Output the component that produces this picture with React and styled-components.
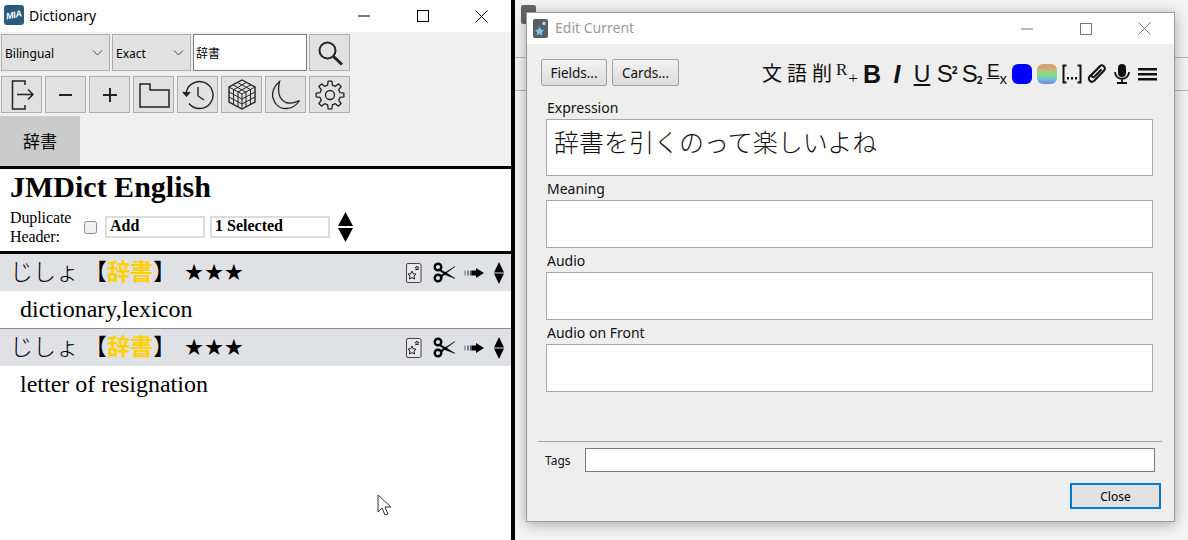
import React from "react";
import styled, { createGlobalStyle } from "styled-components";

const Global = createGlobalStyle`
  html, body { margin: 0; padding: 0; background: #fff; }
  body { width: 1188px; height: 540px; overflow: hidden; font-family: "Open Sans", "Noto Sans CJK JP", sans-serif; }
  * { box-sizing: border-box; }
`;
const ui = `"Noto Sans", "Noto Sans CJK JP", sans-serif`;
const serif = `"Liberation Serif", "Noto Sans CJK JP", serif`;
const sans = `"Liberation Sans", sans-serif`;

const Page = styled.div`display: flex; width: 1188px; height: 540px; position: relative;`;
const LeftPane = styled.div`width: 511px; height: 540px; flex: none; background: #fff; display: flex; flex-direction: column;`;
const Divider = styled.div`width: 4px; flex: none; background: #000;`;
const Desktop = styled.div`
  flex: 1; position: relative; background: #f3f3f3; padding: 12px 13px 18px 11px; display: flex;
`;

const TitleBar = styled.div`height: 32px; flex: none; display: flex; align-items: center; padding-left: 4px; background: #fff;`;
const TitleText = styled.span`font: 14px ${ui}; color: #000; margin-left: 5px; flex: 1; padding-bottom: 2px;`;
const WinButtons = styled.div`display: flex; height: 100%; width: 177px;`;
const WinBtn = styled.div`width: 59px; display: flex; align-items: center; justify-content: center;`;

const Tools = styled.div`background: #f0f0f0; height: 134px; flex: none; display: flex; flex-direction: column; padding: 2px 0 0 1px;`;
const Row = styled.div`display: flex; height: 37px; gap: ${p => p.$gap ?? 4}px; margin-bottom: ${p => p.$mb ?? 0}px;`;
const Select = styled.div`
  width: ${p => p.$w}px; height: 37px; background: #e1e1e1; border: 1px solid #adadad; margin-right: 2px;
  display: flex; align-items: center; justify-content: space-between; padding: 1px 6px 0 3px; font: 12px ${ui}; color: #000;
`;
const SearchInput = styled.div`
  width: 114px; height: 37px; background: #fff; border: 1px solid #7a7a7a; margin-right: 2px;
  display: flex; align-items: center; padding-left: 2px; font: 12px ${ui}; color: #000;
`;
const IconBtn = styled.div`
  width: 41px; height: 37px; background: #e1e1e1; border: 1px solid #adadad; display: flex; align-items: center; justify-content: center;
`;
const Tab = styled.div`
  width: 80px; height: 50px; margin-left: -1px; padding-bottom: 2px; background: #cbcbcb; display: flex; align-items: center; justify-content: center; font: 17px ${ui}; color: #000;
`;
const HeavyRule = styled.div`height: 3px; flex: none; background: #000;`;

const DictHead = styled.div`height: 82px; flex: none; padding: 0 0 0 10px; font-family: ${serif};`;
const DictTitle = styled.div`font-size: 30px; font-weight: 700; line-height: 35px; color: #000;`;
const HeaderControls = styled.div`display: flex; align-items: center; margin-top: 4px;`;
const DupLabel = styled.div`font-size: 16px; line-height: 19px; width: 74px; color: #000; letter-spacing: -0.1px;`;
const Check = styled.div`width: 13px; height: 13px; background: #f0f0f0; border: 1px solid #8f8f8f; border-radius: 2.5px; margin-right: 8px;`;
const BoldBox = styled.div`
  width: ${p => p.$w}px; height: 22px; border: 2px solid #dcdcdc; margin-right: 5px; padding-left: ${p => p.$pl}px;
  font-size: 16px; font-weight: 700; line-height: 16px; color: #000;
`;
const Arrows = styled.div`display: flex; margin-left: 3px;`;

const EntryHead = styled.div`
  height: ${p => p.$h}px; flex: none; background: #e0e1e5; display: flex; align-items: center; padding: 0 7px 0 10px; font-family: ${serif};
`;
const Reading = styled.span`font: 300 23px "Noto Sans CJK JP", sans-serif; color: #000; line-height: 1; flex: none; padding-bottom: 4px;`;
const Term = styled.span`color: #ffd000; font-weight: 700;`;
const Stars = styled.span`font: 22.5px "DejaVu Sans", sans-serif; color: #000; margin-left: 8px; letter-spacing: -0.3px; flex: 1; padding-bottom: 2px;`;
const EntryIcons = styled.div`display: flex; align-items: center;`;
const IconGap = styled.span`width: ${p => p.$w}px; flex: none;`;
const Definition = styled.div`
  height: ${p => p.$h}px; flex: none; padding-left: 20px; font: 24px/37px ${serif}; color: #000;
  border-bottom: ${p => (p.$rule ? "1px solid #8a8a8a" : "none")};
`;

const GhostWindow = styled.div`position: absolute; left: 0; top: 0; right: 0; height: 120px;`;
const GhostIcon = styled.div`position: absolute; left: 6px; top: 5px; width: 15px; height: 19px; background: #62686c; border-radius: 2px;`;
const GhostLine = styled.div`position: absolute; left: 0; right: 0; top: ${p => p.$t}px; height: 1px; background: #b4b4b4;`;
const GhostCtl = styled.div`position: absolute; left: ${p => p.$l}px; top: 9px; opacity: .6;`;

const EditWindow = styled.div`
  flex: 1; position: relative; background: #eeeeee; border: 1px solid #9b9b9b; box-shadow: 0 2px 12px rgba(0,0,0,.32);
  display: flex; flex-direction: column;
`;
const EditTitle = styled.div`height: 31px; flex: none; background: #fff; display: flex; align-items: center; padding-left: 6px;`;
const EditTitleText = styled.span`font: 14px ${ui}; color: #9a9a9a; margin-left: 7px; flex: 1; padding-bottom: 2px;`;
const EditBody = styled.div`flex: 1; display: flex; flex-direction: column; padding: 15px 12px 0 12px;`;
const TopBar = styled.div`display: flex; align-items: flex-start; height: 27px; padding-left: 2px;`;
const PushBtn = styled.div`
  width: ${p => p.$w}px; height: 27px; margin-right: 5px; border: 1px solid #a0a0a0; border-radius: 2px;
  background: linear-gradient(#f2f2f2, #dcdcdc); display: flex; align-items: center; justify-content: center; font: 13.5px ${ui}; color: #111;
`;
const FormatBar = styled.div`display: grid; grid-template-columns: repeat(16, 25px); margin-left: auto; padding-top: 5px; height: 25px;`;
const FormatItem = styled.div`
  width: 20px; height: 20px; display: flex; align-items: center; justify-content: center; color: #111; line-height: 1; position: relative;
  font-family: ${p => p.$font || ui}; font-size: ${p => p.$size || 20}px; font-weight: ${p => p.$weight || 400}; font-style: ${p => p.$italic ? "italic" : "normal"};
`;
const Swatch = styled.div`width: 20px; height: 20px; border-radius: 6px; background: ${p => p.$bg};`;
const Sup = styled.span`font-size: 10px; font-weight: 700; align-self: flex-start; margin-top: 1px;`;
const Sub = styled.span`font-size: 10px; font-weight: 700; align-self: flex-end; margin-bottom: -1px;`;
const FieldLabel = styled.div`font: 14px/18px ${ui}; color: #111; padding-left: 8px; margin-top: ${p => p.$mt ?? 4}px; height: 18px;`;
const Field = styled.div`
  margin-left: 7px; width: 607px; height: ${p => p.$h}px; background: #fff; border: 1px solid #a8a8a8; margin-top: 2px;
  font: 300 25px "Noto Sans CJK JP", sans-serif; color: #111; padding: 3px 0 0 7px; line-height: 36px;
`;
const Separator = styled.div`height: 1px; background: #a0a0a0; margin-top: 49px; margin-left: -1px;`;
const TagsRow = styled.div`display: flex; align-items: center; margin-top: 6px; height: 24px;`;
const TagsLabel = styled.span`font: 12px ${ui}; color: #111; width: 46px; padding-left: 6px;`;
const TagsInput = styled.div`width: 570px; height: 24px; background: #fff; border: 1px solid #7a7a7a;`;
const FootRow = styled.div`display: flex; justify-content: flex-end; margin-top: 11px; padding-right: 1px;`;
const CloseBtn = styled.div`
  width: 91px; height: 26px; background: #e1e1e1; border: 2px solid #0078d7; display: flex; align-items: center; justify-content: center; font: 12px ${ui}; color: #000;
`;
const Cursor = styled.svg`position: absolute; left: 377px; top: 494px;`;
const LogoBox = styled.div`
  width: 20px; height: 20px; margin-bottom: 2px; border-radius: 3px; background: #2b5b7c; display: flex; align-items: center; justify-content: center; overflow: hidden;
`;
const LogoText = styled.span`font: italic 700 9px ${sans}; color: #fff; transform: rotate(-12deg); letter-spacing: -0.3px;`;

const RPlus = styled.span`font: 17px/16px ${serif}; position: absolute; left: -1px; top: -2px;`;
const RPlusMark = styled.span`font: 300 17px/12px ${ui}; position: absolute; right: -1px; bottom: 0;`;
const Under = styled.span`text-decoration: underline; text-decoration-thickness: 1.5px; text-underline-offset: 2px;`;
const SmallS = styled.span`font: 24px ${sans}; letter-spacing: -1px;`;
const ExE = styled.span`font: 19px ${sans}; text-decoration: underline; position: relative; top: -3px;`;
const ExX = styled.span`font: 15px ${sans}; position: relative; top: 4px;`;

const Stroke = ({ w = 28, h = 28, sw = 1.5, children }) => (
  <svg width={w} height={h} viewBox={`0 0 ${w} ${h}`} fill="none" stroke="#222" strokeWidth={sw}>{children}</svg>
);
const Chevron = () => (
  <svg width="11" height="6" viewBox="0 0 11 6" fill="none" stroke="#444" strokeWidth="1"><path d="M1 .5l4.5 4.5L10 .5" /></svg>
);
const Search = () => (
  <Stroke w={28} h={28} sw={2}><circle cx="11.500" cy="11.500" r="8" /><path d="M17.500 17.500L26 25.500" strokeWidth="3" /></Stroke>
);
const Exit = () => (
  <Stroke w={24} h={32}><path d="M15 6V2H2.500v28H15v-4" /><path d="M7 15.500h16M18 10.500l5 5-5 5" /></Stroke>
);
const Minus = () => <Stroke w={14} h={4} sw={2}><path d="M0 2h13" /></Stroke>;
const Plus = () => <Stroke w={14} h={14} sw={2}><path d="M0 7h14M7 0v14" /></Stroke>;
const Folder = () => <Stroke w={32} h={26}><path d="M2 2h10v6h19v17H2z" /></Stroke>;
const History = () => (
  <Stroke w={32} h={30} sw={1.4}><path d="M4 15a13.500 13.500 0 1 1 3 8.500" /><path d="M1 12l3.500 4 3.500-4" fill="#222" /><path d="M16 7v9l6 4" /></Stroke>
);
const Cube = () => (
  <Stroke w={30} h={31} sw={1}>
    <path d="M15 1l13 7v15l-13 7-13-7V8z" strokeWidth="1.400" />
    <path d="M15 15L2 8M15 15l13-7M15 15v15M6 5.800l13 7.400M10.500 3.400l13 7.200M24 5.800l-13 7.200M19.500 3.400l-13 7.400M2 13l13 7 13-7M2 18l13 7 13-7M6.500 10.500v15.200M11 13v15M19 13v15M23.500 10.500v15.200" />
  </Stroke>
);
const Moon = () => (
  <Stroke w={30} h={30} sw={1.3}>
    <path d="M8.500 1.500C3 6 .5 13 2 18c2 7 7 11 13 10.500 5 0 10-2.500 13.500-8-4.500 2.500-9.500 3-13.500 2C9 20 6 13 8.500 1.500z" />
  </Stroke>
);
const gearPath = (() => {
  const pts = [];
  const teeth = 8, c = 15, ro = 14, ri = 10.2;
  for (let i = 0; i < teeth; i++) {
    const a = (i / teeth) * Math.PI * 2 - Math.PI / 2;
    const s = (Math.PI * 2) / teeth;
    [[-0.30, ri], [-0.17, ro], [0.17, ro], [0.30, ri]].forEach(([f, r]) => {
      const t = a + f * s;
      pts.push(`${(c + r * Math.cos(t)).toFixed(2)} ${(c + r * Math.sin(t)).toFixed(2)}`);
    });
  }
  return `M${pts.join("L")}Z`;
})();
const Gear = () => (
  <Stroke w={30} h={30} sw={1.3}><path d={gearPath} strokeLinejoin="round" /><circle cx="15" cy="15" r="4.500" /></Stroke>
);
const CardIcon = () => (
  <Stroke w={16} h={20} sw={1}>
    <rect x=".5" y=".5" width="14.500" height="19" rx="1.500" fill="#e8e8e8" stroke="#444" />
    <path d="M6 8l1.200 2.800 2.800.3-2 2 .6 3L6 14.600 3.400 16l.6-3-2-2 2.800-.3z" />
    <path d="M11 3l.6 1.300 1.300.2-1 1 .3 1.400-1.200-.7-1.200.7.3-1.400-1-1 1.300-.2z" />
  </Stroke>
);
const Scissors = () => (
  <svg width="22" height="21" viewBox="0 0 22 21" fill="none" stroke="#000">
    <circle cx="5" cy="5" r="3.300" strokeWidth="2.400" />
    <circle cx="5" cy="16" r="3.300" strokeWidth="2.400" />
    <path d="M7.500 7.500L13 11l-1.500 1.200L7 9z" fill="#000" strokeWidth=".5" />
    <path d="M7.500 13.500L22 4.500 12 12l-3 3z" fill="#000" strokeWidth=".5" />
    <path d="M12 10L22 16.500 11.500 12.500z" fill="#000" strokeWidth=".5" />
  </svg>
);
const ArrowIcon = () => (
  <svg width="20" height="10" viewBox="0 0 20 10">
    <rect x="0" y="2.500" width="2" height="5" fill="#9aa6ad" />
    <rect x="3" y="2.500" width="2" height="5" fill="#6e8796" />
    <rect x="6" y="2.500" width="2" height="5" fill="#3d5a70" />
    <path d="M8 2.500h4V0l8 5-8 5V7.500H8z" fill="#000" />
  </svg>
);
const UpDown = ({ w = 10, h = 22, gap = 1 }) => {
  const t = (h - gap) / 2;
  return (
    <svg width={w} height={h} viewBox={`0 0 ${w} ${h}`} fill="#000">
      <path d={`M${w / 2} 0L${w} ${t}H0z`} />
      <path d={`M0 ${t + gap}H${w}L${w / 2} ${h}z`} />
    </svg>
  );
};
const Ellipsis = () => (
  <svg width="20" height="20" viewBox="0 0 20 20" fill="none" stroke="#111" strokeWidth="2">
    <path d="M4.500 1.500H1.500v17h3M15.500 1.500h3v17h-3" />
    <rect x="5" y="13" width="2" height="2.500" fill="#111" stroke="none" />
    <rect x="9" y="13" width="2" height="2.500" fill="#111" stroke="none" />
    <rect x="13" y="13" width="2" height="2.500" fill="#111" stroke="none" />
  </svg>
);
const Clip = () => (
  <svg width="20" height="20" viewBox="0 0 20 20" fill="none" stroke="#111" strokeWidth="2" strokeLinecap="round">
    <path d="M12.500 3L3 12c-2.800 3 .5 7.500 4 5l10-10.500c2.500-3-1.500-6.500-4-4.500L5 10.500c-1.200 1.500.8 3.500 2.400 2.200L14 6" />
  </svg>
);
const Mic = () => (
  <svg width="18" height="20" viewBox="0 0 18 20" fill="none" stroke="#111" strokeWidth="1.800">
    <rect x="5" y="0" width="8" height="13" rx="4" fill="#111" stroke="none" />
    <path d="M2 8c0 9 14 9 14 0M9 14v5M4 19h10" />
  </svg>
);
const Menu = () => (
  <svg width="19" height="13" viewBox="0 0 19 13" fill="#111"><rect width="19" height="2.500" /><rect y="5" width="19" height="2.500" /><rect y="10" width="19" height="2.500" /></svg>
);
const CloseX = ({ c = "#000" }) => (
  <svg width="13" height="13" viewBox="0 0 13 13" stroke={c} fill="none"><path d="M.5.500l12 12M12.500.500l-12 12" /></svg>
);
const Max = ({ c = "#000" }) => <svg width="12" height="12" viewBox="0 0 12 12" stroke={c} fill="none"><rect x=".5" y=".5" width="11" height="11" /></svg>;
const Min = ({ c = "#000" }) => <svg width="12" height="2" viewBox="0 0 12 2" stroke={c}><path d="M0 1h12" /></svg>;
const AnkiIcon = () => (
  <svg width="15" height="19" viewBox="0 0 15 19">
    <rect x="0" y="0" width="15" height="19" rx="2" fill="#585e63" />
    <path d="M6.500 7.500l1.500 3 3.200.5-2.300 2.200.5 3.200-2.900-1.500-2.800 1.500.5-3.200L1.900 11l3.200-.5z" fill="#7cc4f0" />
    <path d="M11 2l.7 1.500 1.600.2-1.200 1.100.3 1.600-1.400-.8-1.400.8.300-1.600-1.200-1.100 1.600-.2z" fill="#cfe6f5" />
  </svg>
);
const rainbow = "linear-gradient(#d9a273 0 20%, #b8c080 32%, #7fe07f 52%, #70c8c8 72%, #7b84ea 100%)";

function Entry({ def, rule }) {
  return (
    <>
      <EntryHead $h={37}>
        <Reading>じしょ 【<Term>辞書</Term>】</Reading>
        <Stars>★★★</Stars>
        <EntryIcons>
          <CardIcon />
          <IconGap $w={11} />
          <Scissors />
          <IconGap $w={9} />
          <ArrowIcon />
          <IconGap $w={10} />
          <UpDown />
        </EntryIcons>
      </EntryHead>
      <Definition $h={38} $rule={rule}>{def}</Definition>
    </>
  );
}

export default function App() {
  return (
    <>
      <Global />
      <Page>
        <LeftPane>
          <TitleBar>
            <LogoBox><LogoText>MIA</LogoText></LogoBox>
            <TitleText>Dictionary</TitleText>
            <WinButtons>
              <WinBtn><Min /></WinBtn>
              <WinBtn><Max /></WinBtn>
              <WinBtn><CloseX /></WinBtn>
            </WinButtons>
          </TitleBar>
          <Tools>
            <Row $gap={0} $mb={5}>
              <Select $w={109}>Bilingual<Chevron /></Select>
              <Select $w={79}>Exact<Chevron /></Select>
              <SearchInput>辞書</SearchInput>
              <IconBtn><Search /></IconBtn>
            </Row>
            <Row $gap={3} $mb={3}>
              <IconBtn><Exit /></IconBtn>
              <IconBtn><Minus /></IconBtn>
              <IconBtn><Plus /></IconBtn>
              <IconBtn><Folder /></IconBtn>
              <IconBtn><History /></IconBtn>
              <IconBtn><Cube /></IconBtn>
              <IconBtn><Moon /></IconBtn>
              <IconBtn><Gear /></IconBtn>
            </Row>
            <Tab>辞書</Tab>
          </Tools>
          <HeavyRule />
          <DictHead>
            <DictTitle>JMDict English</DictTitle>
            <HeaderControls>
              <DupLabel>Duplicate Header:</DupLabel>
              <Check />
              <BoldBox $w={100} $pl={3}>Add</BoldBox>
              <BoldBox $w={120} $pl={3}>1 Selected</BoldBox>
              <Arrows><UpDown w={15} h={30} gap={2} /></Arrows>
            </HeaderControls>
          </DictHead>
          <HeavyRule />
          <Entry def="dictionary,lexicon" rule />
          <Entry def="letter of resignation" />
        </LeftPane>
        <Divider />
        <Desktop>
          <GhostWindow>
            <GhostIcon />
            <GhostCtl $l={578}><Max c="#888" /></GhostCtl>
            <GhostCtl $l={637}><CloseX c="#888" /></GhostCtl>
            <GhostLine $t={57} />
            <GhostLine $t={90} />
          </GhostWindow>
          <EditWindow>
            <EditTitle>
              <AnkiIcon />
              <EditTitleText>Edit Current</EditTitleText>
              <WinButtons>
                <WinBtn><Min c="#777" /></WinBtn>
                <WinBtn><Max c="#777" /></WinBtn>
                <WinBtn><CloseX c="#777" /></WinBtn>
              </WinButtons>
            </EditTitle>
            <EditBody>
              <TopBar>
                <PushBtn $w={66}>Fields...</PushBtn>
                <PushBtn $w={67}>Cards...</PushBtn>
                <FormatBar>
                  <FormatItem>文</FormatItem>
                  <FormatItem>語</FormatItem>
                  <FormatItem>削</FormatItem>
                  <FormatItem><RPlus>R</RPlus><RPlusMark>+</RPlusMark></FormatItem>
                  <FormatItem $font={sans} $weight={700} $size={25}>B</FormatItem>
                  <FormatItem $font={sans} $weight={700} $italic $size={25}>I</FormatItem>
                  <FormatItem $font={sans} $size={23}><Under>U</Under></FormatItem>
                  <FormatItem><SmallS>S</SmallS><Sup>2</Sup></FormatItem>
                  <FormatItem><SmallS>S</SmallS><Sub>2</Sub></FormatItem>
                  <FormatItem><ExE>E</ExE><ExX>x</ExX></FormatItem>
                  <FormatItem><Swatch $bg="#0000ff" /></FormatItem>
                  <FormatItem><Swatch $bg={rainbow} /></FormatItem>
                  <FormatItem><Ellipsis /></FormatItem>
                  <FormatItem><Clip /></FormatItem>
                  <FormatItem><Mic /></FormatItem>
                  <FormatItem><Menu /></FormatItem>
                </FormatBar>
              </TopBar>
              <FieldLabel $mt={13}>Expression</FieldLabel>
              <Field $h={57}>辞書を引くのって楽しいよね</Field>
              <FieldLabel>Meaning</FieldLabel>
              <Field $h={48} />
              <FieldLabel>Audio</FieldLabel>
              <Field $h={48} />
              <FieldLabel>Audio on Front</FieldLabel>
              <Field $h={48} />
              <Separator />
              <TagsRow>
                <TagsLabel>Tags</TagsLabel>
                <TagsInput />
              </TagsRow>
              <FootRow><CloseBtn>Close</CloseBtn></FootRow>
            </EditBody>
          </EditWindow>
        </Desktop>
        <Cursor width="16" height="24" viewBox="0 0 16 24"><path d="M1 1v17l4-4 3 7 3-1-3-7h6z" fill="#fff" stroke="#333" strokeWidth="1" /></Cursor>
      </Page>
    </>
  );
}
